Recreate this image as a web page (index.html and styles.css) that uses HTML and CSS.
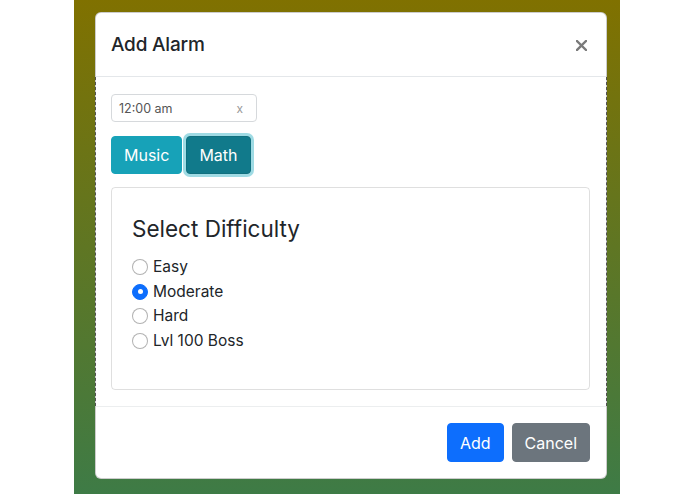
FILE: index.html
```html
<!DOCTYPE html>
<html>
<head>
<meta charset="utf-8">
<link rel="stylesheet" href="styles.css">
</head>
<body>
<div class="stage">
  <div class="modal">
    <div class="modal-header">
      <h5 class="modal-title">Add Alarm</h5>
      <button class="close" aria-label="Close">
        <svg width="11" height="11" viewBox="0 0 11 11"><path d="M1 1 L10 10 M10 1 L1 10" stroke="#7a7a7a" stroke-width="2.4" stroke-linecap="square"/></svg>
      </button>
    </div>
    <div class="modal-body">
      <div class="time-input">
        <span class="time-value">12:00 am</span>
        <span class="time-clear">x</span>
      </div>
      <div class="mode-buttons">
        <button class="btn btn-info">Music</button>
        <button class="btn btn-info active">Math</button>
      </div>
      <div class="card">
        <h4 class="card-title">Select Difficulty</h4>
        <div class="radios">
          <label class="form-check"><span class="radio"></span>Easy</label>
          <label class="form-check"><span class="radio checked"></span>Moderate</label>
          <label class="form-check"><span class="radio"></span>Hard</label>
          <label class="form-check"><span class="radio"></span>Lvl 100 Boss</label>
        </div>
      </div>
    </div>
    <div class="modal-footer">
      <button class="btn btn-primary">Add</button>
      <button class="btn btn-secondary">Cancel</button>
    </div>
  </div>
</div>
</body>
</html>
```
FILE: styles.css
```css
* { box-sizing: border-box; }
html, body { margin: 0; padding: 0; background: #fff; }
body {
  font-family: Inter, "Noto Sans", "Liberation Sans", sans-serif;
  color: #212529;
  height: 494px;
  overflow: hidden;
}
.stage {
  margin-left: 74px;
  width: 546px;
  height: 494px;
  background: linear-gradient(#807100, #3e7b46);
  padding: 12px 13px 0 21px;
}
.modal {
  background: #fff;
  border: 1px solid rgba(0,0,0,.2);
  border-radius: 6px;
  width: 512px;
}
.modal-header {
  display: flex;
  align-items: center;
  justify-content: space-between;
  padding: 17px 16px 16px 15px;
  border-bottom: 1px solid #e4e7ea;
}
.modal-title {
  margin: 0;
  font-size: 19px;
  font-weight: 500;
  line-height: 30px;
  letter-spacing: -0.2px;
}
.close {
  border: 0;
  background: none;
  padding: 0;
  margin-right: 3px;
  width: 11px;
  height: 11px;
  display: flex;
}
.modal-body {
  padding: 17px 16px 16px 15px;
  margin: 0 -1px;
  border-left: 1px dashed rgba(0,0,0,.6);
  border-right: 1px dashed rgba(0,0,0,.6);
}
.time-input {
  width: 146px;
  height: 28px;
  border: 1px solid #d6d9dc;
  border-radius: 4px;
  display: flex;
  align-items: center;
  justify-content: space-between;
  padding: 0 13px 0 7px;
  font-size: 12.5px;
  color: #555;
}
.time-clear { color: #999; font-size: 12px; }
.mode-buttons {
  display: flex;
  gap: 4px;
  margin-top: 14px;
}
.btn {
  font-family: inherit;
  font-size: 16px;
  line-height: 24px;
  padding: 6px 12px;
  border: 1px solid transparent;
  border-radius: 4px;
  color: #fff;
  height: 38px;
}
.btn-info { background: #17a2b8; border-color: #17a2b8; }
.btn-info.active {
  background: #117a8b;
  border-color: #10707f;
  box-shadow: 0 0 0 3px rgba(80,190,205,.55);
}
.card {
  margin-top: 13px;
  border: 1px solid rgba(0,0,0,.125);
  border-radius: 4px;
  padding: 26px 20px 30px 20px;
  height: 203px;
}
.card-title {
  margin: 0 0 12px 0;
  font-size: 22.5px;
  font-weight: 400;
  line-height: 29px;
}
.radios { display: flex; flex-direction: column; }
.form-check {
  display: flex;
  align-items: center;
  font-size: 15.5px;
  line-height: 24.5px;
  height: 24.5px;
}
.radio {
  width: 16px;
  height: 16px;
  border-radius: 50%;
  border: 1px solid rgba(0,0,0,.3);
  margin-right: 5px;
  flex: none;
  background: #fff;
}
.radio.checked {
  background: #0d6efd;
  border-color: #0d6efd;
  position: relative;
}
.radio.checked::after {
  content: "";
  position: absolute;
  left: 4.5px; top: 4.5px;
  width: 5px; height: 5px;
  border-radius: 50%;
  background: #fff;
}
.modal-footer {
  display: flex;
  justify-content: flex-end;
  padding: 12px;
  border-top: 1px solid #eceeef;
}
.modal-footer .btn { margin: 4px; height: 39px; }
.btn-primary { background: #0d6efd; border-color: #0d6efd; }
.btn-secondary { background: #6c757d; border-color: #6c757d; }
```
